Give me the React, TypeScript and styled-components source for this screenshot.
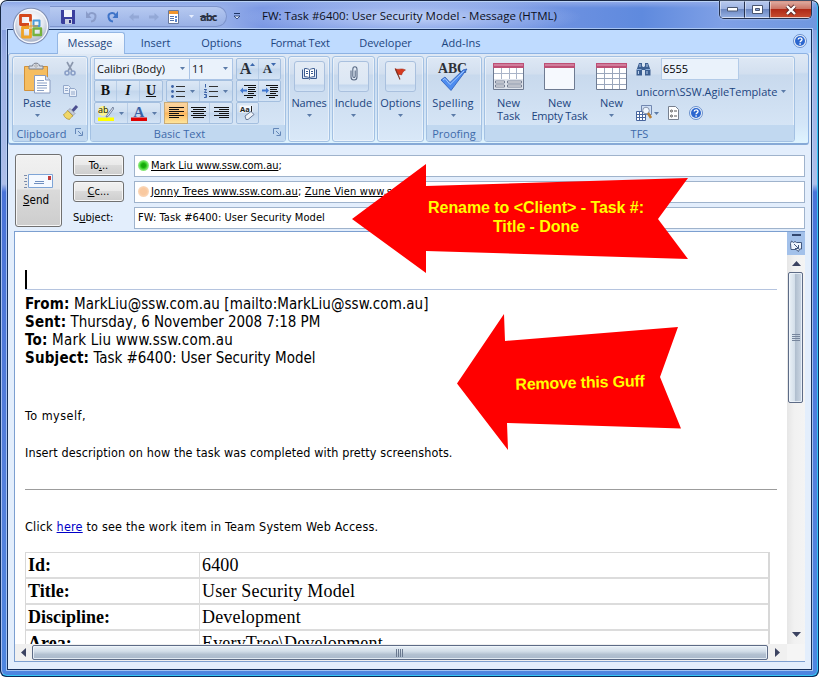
import React from 'react';
import styled, { createGlobalStyle, css } from 'styled-components';

const ui = '"Open Sans", "Noto Sans", sans-serif';
const tahoma = '"DejaVu Sans Condensed", "DejaVu Sans", sans-serif';

const GlobalStyle = createGlobalStyle`
  *, *::before, *::after { box-sizing: border-box; }
  body { margin: 0; background: #fff; overflow: hidden; }
  svg { display: block; flex: none; overflow: visible; }
`;

/* ---------- window frame ---------- */

const Frame = styled.div`
  position: relative;
  width: 819px;
  height: 677px;
  padding: 1px;
  border-radius: 7px 7px 6px 6px;
  background: linear-gradient(#16233c, #123a66 12%, #0a2a5c);
  overflow: hidden;
  font-family: ${ui};
`;

const Glass = styled.div`
  height: 675px;
  padding: 0 5px 5px 5px;
  border: 1px solid;
  border-color: #b9d2f6 #35c6f5 #35c6f5 #a8bff0;
  border-radius: 6px;
  background:
    radial-gradient(ellipse 170px 20px at 410px 15px, rgba(200, 216, 249, 0.9), rgba(200, 216, 249, 0) 100%),
    linear-gradient(#8fa9e8 0, rgba(120, 150, 228, 0) 6px),
    linear-gradient(90deg, #a9bfee 0, #9db5ea 210px, #7b98e4 260px, #7394e2 520px, #5f8ade 640px, #7fa0e6 720px, #6f97df 100%) 0 0 / 100% 28px no-repeat,
    linear-gradient(#7795dd 0, #9cb0e4 60px, #aebfe9 182px, #4a74d8 190px, #5480dc 480px, #4e86e0 100%);
`;

const Titlebar = styled.header`
  display: flex;
  height: 27px;
  margin-left: 8px;
`;

const Orb = styled.div`
  width: 38px;
  height: 38px;
  margin: 5px -2px 0 -3px;
  z-index: 3;
  flex: none;
`;

const QuickAccess = styled.div`
  display: flex;
  align-items: center;
  width: 177px;
  height: 21px;
  margin: 4px 0 0 2px;
  padding-left: 11px;
  flex: none;
  border: 1px solid #7d94cc;
  border-left: 0;
  border-radius: 0 11px 11px 0;
  background: linear-gradient(rgba(190, 207, 242, 0.75), rgba(150, 174, 226, 0.6));
`;

const Struck = styled.s`
  margin-left: 6px;
  font: bold 11px/16px 'Open Sans', sans-serif;
  letter-spacing: -0.9px;
  color: #2b3245;
`;

const QatMore = styled.div`
  width: 11px;
  margin: 11px 0 0 6px;
`;

const WindowTitle = styled.h1`
  flex: 1;
  margin: 4px 0 0 18px;
  font: 11.5px/20px ${ui};
  letter-spacing: 0.01px;
  white-space: nowrap;
  color: #0b0f1c;
`;

const Caption = styled.div`
  display: flex;
  height: 18px;
  margin: -1px 0 0 0;
  border: 1px solid #26324f;
  border-top: 0;
  border-radius: 0 0 5px 5px;
  overflow: hidden;
  box-shadow: 0 0 2px rgba(230, 240, 255, 0.8);
`;

const CaptionButton = styled.button<{ $close?: boolean }>`
  display: grid;
  place-items: center;
  width: ${(p) => (p.$close ? 41 : 25)}px;
  height: 17px;
  padding: 0;
  border: 1px solid rgba(255, 255, 255, 0.45);
  border-right: 1px solid #26324f;
  background: ${(p) =>
    p.$close
      ? 'linear-gradient(#dda79c 0, #cc7565 45%, #b02a17 50%, #c44a2e 100%)'
      : 'linear-gradient(#b5c7ed 0, #9db3e2 45%, #6c87c0 50%, #93aee2 100%)'};
  &:last-child { border-right: 0; }
`;

const Client = styled.main`
  display: flex;
  flex-direction: column;
  height: 641px;
  border: 1px solid #16305c;
  outline: 1px solid rgba(190, 215, 250, 0.75);
  background: #e3eefc;
`;

/* ---------- tabs ---------- */

const Tabs = styled.nav`
  display: flex;
  align-items: flex-start;
  height: 23px;
  padding: 2px 4px 0 49px;
  background: #bfdbff;
`;

const Tab = styled.a<{ $w: number; $ls?: number; $active?: boolean }>`
  width: ${(p) => p.$w}px;
  height: 21px;
  font-size: 11px;
  line-height: 22px;
  letter-spacing: ${(p) => p.$ls ?? 0}px;
  text-align: center;
  white-space: nowrap;
  color: #1c4580;
  ${(p) =>
    p.$active &&
    css`
      height: 22px;
      padding-right: 2px;
      border: 1px solid #93b6e4;
      border-bottom: 0;
      border-radius: 3px 3px 0 0;
      background: linear-gradient(#f6faff, #e3edf9);
      line-height: 20px;
      z-index: 1;
    `}
`;

const HelpSlot = styled.div`
  margin: 2px 0 0 auto;
`;

/* ---------- ribbon ---------- */

const Ribbon = styled.section`
  display: flex;
  gap: 2px;
  height: 92px;
  margin: 0 2px 0 0;
  padding: 2px 13px 0 3px;
  flex: none;
  border: 1px solid #8db2e3;
  border-bottom: 2px solid #86a9d6;
  border-radius: 3px;
  background: linear-gradient(#dfe9f5 0, #d2e0f1 18px, #c7d9ee 20px, #d4e6f8 70px, #dff4ff 100%);
`;

const Group = styled.div<{ $w: number }>`
  display: flex;
  flex-direction: column;
  width: ${(p) => p.$w}px;
  height: 86px;
  flex: none;
  border: 1px solid #a3c1e3;
  border-radius: 3px;
  box-shadow: inset 0 0 0 1px rgba(255, 255, 255, 0.45);
  background: linear-gradient(#dee8f5 0, #d2dfef 17px, #c8d9ed 18px, #d9e8f8 100%);
  overflow: hidden;
`;

const GroupBody = styled.div`
  display: flex;
  flex: 1;
  min-height: 0;
`;

const GroupName = styled.div`
  display: flex;
  align-items: center;
  justify-content: center;
  position: relative;
  height: 16px;
  background: #c1d8f0;
  font-size: 11px;
  line-height: 15px;
  color: #3e6aaa;
  white-space: nowrap;
`;

const Launcher = styled.span`
  position: absolute;
  right: 4px;
  top: 3px;
`;

const Big = styled.div<{ $w: number; $top?: number; $icon?: number }>`
  display: flex;
  flex-direction: column;
  align-items: center;
  width: ${(p) => p.$w}px;
  padding-top: ${(p) => p.$top ?? 4}px;
  flex: none;
  > :first-child { height: ${(p) => p.$icon ?? 33}px; }
  > svg:last-child { margin-top: 5px; }
`;

const BigLabel = styled.div<{ $ls?: number }>`
  font-size: 11px;
  line-height: 13px;
  letter-spacing: ${(p) => p.$ls ?? 0}px;
  text-align: center;
  color: #1c4580;
  white-space: nowrap;
`;

const Tile = styled.div`
  display: grid;
  place-items: center;
  width: 31px;
  height: 31px;
  border: 1px solid #a9c0de;
  border-radius: 3px;
  background: linear-gradient(#e3ebf5 0, #dce7f4 22px, #c3d6ed 23px, #d3e3f5 100%);
  > svg { margin-top: -6px; }
`;

const TileBox = styled.div``;
const IconSlot = styled.div``;

const SideIcons = styled.div`
  display: flex;
  flex-direction: column;
  gap: 7px;
  padding: 4px 0 0 2px;
`;

const FontGrid = styled.div`
  display: flex;
  flex-direction: column;
  padding: 1px 0 0 3px;
`;

const ToolRow = styled.div`
  display: flex;
  height: 22px;
  gap: 3px;
`;

const Combo = styled.div<{ $w: number }>`
  display: flex;
  align-items: center;
  justify-content: space-between;
  width: ${(p) => p.$w}px;
  height: 22px;
  padding: 0 4px 1px 2px;
  border: 1px solid #aac4e6;
  background: #eaf2fb;
  font-size: 11px;
  letter-spacing: 0;
  white-space: nowrap;
  color: #111;
  & + & { margin-left: -4px; }
`;

const Cluster = styled.div<{ $w: number }>`
  display: flex;
  align-items: stretch;
  width: ${(p) => p.$w}px;
  height: 22px;
  border: 1px solid #a4bfdf;
  border-radius: 2px;
  background: linear-gradient(#dbe7f5 0, #cfdff1 9px, #c3d6ec 10px, #d3e3f5 100%);
`;

const Tool = styled.div<{ $w: number; $on?: boolean }>`
  display: flex;
  align-items: center;
  justify-content: center;
  gap: 5px;
  width: ${(p) => p.$w}px;
  flex: none;
  ${(p) =>
    p.$on
      ? css`
          margin: -1px;
          border: 1px solid #c8ab78;
          background: linear-gradient(#fbd5a0, #fcc57d 45%, #fbb65c 50%, #fee59b);
        `
      : css`border-right: 1px solid rgba(160, 187, 220, 0.55);`}
  &:last-child { border-right: 0; }
`;

const Letter = styled.span<{ $kind: 'b' | 'i' | 'u' }>`
  font: 14px/18px 'Liberation Serif', serif;
  color: #111;
  font-weight: bold;
  font-style: ${(p) => (p.$kind === 'i' ? 'italic' : 'normal')};
  text-decoration: ${(p) => (p.$kind === 'u' ? 'underline' : 'none')};
`;

const Grow = styled.span<{ $size: number }>`
  display: flex;
  align-items: flex-end;
  font: bold ${(p) => p.$size}px/18px 'Liberation Serif', serif;
  color: #2b3038;
  > svg { margin: 0 0 12px -1px; align-self: flex-end; }
`;

const TfsSide = styled.div`
  display: flex;
  flex-direction: column;
  width: 158px;
  padding: 1px 0 0 0;
`;

const TfsRow = styled.div<{ $h: number; $gap: number }>`
  display: flex;
  align-items: center;
  gap: ${(p) => p.$gap}px;
  height: ${(p) => p.$h}px;
  font-size: 11px;
  color: #1c4580;
  white-space: nowrap;
`;

const TfsTools = styled(TfsRow)`
  > :nth-child(3) { margin-left: 8px; }
  > :nth-child(4) { margin-left: 9px; }
`;

const TaskId = styled.div`
  width: 78px;
  height: 22px;
  padding-left: 1px;
  border: 1px solid #b3cbe8;
  background: #eaf2fb;
  line-height: 20px;
  color: #000;
`;

/* ---------- message header form ---------- */

const Envelope = styled.section`
  display: flex;
  height: 86px;
  flex: none;
  padding: 9px 6px 0 7px;
  color: #000;
  font: 11px/20px ${tahoma};
`;

const Push = styled.button<{ $send?: boolean }>`
  display: flex;
  flex-direction: column;
  align-items: center;
  justify-content: center;
  width: ${(p) => (p.$send ? 47 : 51)}px;
  height: ${(p) => (p.$send ? 73 : 21)}px;
  padding: 0;
  flex: none;
  border: 1px solid #707070;
  border-radius: 3px;
  box-shadow: inset 0 0 0 1px #f6f6f6;
  background: linear-gradient(#f1f1f1 0, #e9e9e9 47%, #dadada 50%, #cdcdcd 100%);
  color: #000;
  font: 11px/15px ${tahoma};
`;

const SendText = styled.span`
  margin-top: 4px;
  margin-right: 5px;
  font-size: 11.5px;
`;

const Fields = styled.div`
  display: flex;
  flex-direction: column;
  flex: 1;
  gap: 4px;
  padding: 1px 0 0 11px;
`;

const FieldRow = styled.div`
  display: flex;
  align-items: center;
  height: 22px;
`;

const FieldHead = styled.div`
  width: 61px;
  flex: none;
  margin-top: -1px;
`;

const FieldBox = styled.div<{ $ls?: number }>`
  display: flex;
  align-items: center;
  flex: 1;
  height: 22px;
  padding-left: 3px;
  border: 1px solid #9fb3cc;
  background: #fff;
  letter-spacing: ${(p) => p.$ls ?? 0}px;
  white-space: pre;
`;

const Presence = styled.i<{ $tone: 'green' | 'peach' }>`
  width: 11px;
  height: 11px;
  margin: -2px 2px 0 0;
  border-radius: 50%;
  background: ${(p) =>
    p.$tone === 'green'
      ? 'radial-gradient(circle, #17a80c 0 25%, #35cf25 40%, #7fe571 60%, #c9f5c2 100%)'
      : 'radial-gradient(circle, #f9c9a0 0 40%, #fbd9bb 70%, #fdeee0 100%)'};
`;

/* ---------- message body ---------- */

const BodyBox = styled.section`
  display: grid;
  grid-template: 412px 17px / 1fr 18px;
  height: 431px;
  flex: none;
  margin: 0 6px 0 6px;
  border: 1px solid #7c9fd0;
  background: #fff;
`;

const Document = styled.article`
  padding: 38px 10px 0 10px;
  overflow: hidden;
  color: #000;
`;

const Caret = styled.div`
  width: 2px;
  height: 19px;
  background: #000;
`;

const Rule = styled.hr<{ $grey?: boolean }>`
  height: 1px;
  margin: 0;
  border: 0;
  background: ${(p) => (p.$grey ? '#9c9c9c' : '#b5c4df')};
`;

const Headers = styled.div`
  margin-top: 5px;
  height: 113px;
`;

const HeaderLine = styled.p<{ $ls: number }>`
  margin: 0;
  font: 15px/18px ${tahoma};
  letter-spacing: ${(p) => p.$ls}px;
  white-space: pre;
  b { letter-spacing: 0.2px; }
`;

const Para = styled.p<{ $h: number; $ls: number; $top?: number }>`
  height: ${(p) => p.$h}px;
  margin: ${(p) => p.$top ?? 0}px 0 0;
  font: 12.5px/16px ${tahoma};
  letter-spacing: ${(p) => p.$ls}px;
  white-space: nowrap;
  a { color: #0000c8; text-decoration: underline; }
`;

const Details = styled.dl`
  display: grid;
  grid-template-columns: 174px 1fr;
  width: 745px;
  margin: 0;
  border: 1px solid #d8d8d8;
  border-right: 2px solid #d8d8d8;
  font: 18px/24px 'Liberation Serif', serif;
`;

const Term = styled.dt`
  height: 26px;
  padding: 0 0 0 2px;
  border-bottom: 2px solid #dcdcdc;
  border-right: 1px solid #dcdcdc;
  font-weight: bold;
`;

const Value = styled.dd`
  height: 26px;
  margin: 0;
  padding: 0 0 0 2px;
  border-bottom: 2px solid #dcdcdc;
  letter-spacing: 0.17px;
`;

const VBar = styled.aside`
  display: flex;
  flex-direction: column;
  align-items: center;
  background: linear-gradient(90deg, #e6e6e6, #f1f1f1 40%, #f4f4f4);
`;

const PaneTools = styled.div`
  display: flex;
  flex-direction: column;
  align-items: center;
  gap: 4px;
  width: 18px;
  height: 23px;
  padding-top: 2px;
  background: #a3c1ea;
`;

const ArrowCell = styled.div<{ $w: number; $h: number }>`
  display: grid;
  place-items: center;
  width: ${(p) => p.$w}px;
  height: ${(p) => p.$h}px;
  flex: none;
`;

const Thumb = styled.div<{ $vertical?: boolean }>`
  display: grid;
  place-items: center;
  border: 1px solid #5d6b86;
  border-radius: 2px;
  box-shadow: inset 0 0 0 1px rgba(240, 246, 252, 0.8);
  ${(p) =>
    p.$vertical
      ? css`
          width: 15px;
          height: 131px;
          margin-right: 1px;
          background: linear-gradient(90deg, #eaf1f7 0, #d3dee9 45%, #b1bfcf 50%, #cdd8e5 100%);
        `
      : css`
          width: 736px;
          height: 15px;
          background: linear-gradient(#eaf1f7 0, #d3dee9 40%, #b3c1d1 65%, #a9b8cb 100%);
        `}
`;

const HBar = styled.div`
  display: flex;
  align-items: center;
  background: #f0f0f0;
`;

const Spacer = styled.div`flex: 1;`;
const Corner = styled.div`background: #f5f5f5;`;

/* ---------- callouts lying over the window ---------- */

const Overlay = styled.div`
  position: absolute;
  inset: 0;
  z-index: 5;
`;

const CalloutText = styled.div<{ $x: number; $y: number; $w: number; $tilt?: number; $ls: number }>`
  position: absolute;
  left: ${(p) => p.$x}px;
  top: ${(p) => p.$y}px;
  width: ${(p) => p.$w}px;
  transform: rotate(${(p) => p.$tilt ?? 0}deg);
  font: bold 16px/19px 'Liberation Sans', Arial, sans-serif;
  letter-spacing: ${(p) => p.$ls}px;
  text-align: center;
  white-space: nowrap;
  color: #ff0;
`;

/* ---------- icons ---------- */

const Drop = ({ color = '#5b7ba8' }: { color?: string }) => (
  <svg width="5" height="3"><path d="M0 0h5L2.5 3z" fill={color} /></svg>
);

const OfficeOrb = () => (
  <svg width="38" height="38" viewBox="0 0 38 38">
    <defs>
      <radialGradient id="orb" cx=".5" cy=".35" r=".65">
        <stop offset="0" stopColor="#fff" /><stop offset=".6" stopColor="#e4e8f0" /><stop offset="1" stopColor="#a9b3c8" />
      </radialGradient>
    </defs>
    <circle cx="19" cy="19" r="18.3" fill="#7e8eb4" />
    <circle cx="19" cy="19" r="17.2" fill="#f6f8fc" />
    <circle cx="19" cy="19" r="15.8" fill="url(#orb)" />
    <g fill="none" strokeLinejoin="round">
      <path d="M17 17.500H8.500v-9h10v6" stroke="#d4481c" strokeWidth="2.800" />
      <path d="M21.500 13.500h6v5.500h-6z" stroke="#4a9ad8" strokeWidth="2" />
      <path d="M17.500 20.500h-7v9.500h8v-8" stroke="#efa326" strokeWidth="2.800" />
      <path d="M21.500 21.500h7.500v6.500h-7.500z" stroke="#76b13c" strokeWidth="2.400" />
      <path d="M19 14v12M14 19h12" stroke="#e9952b" strokeWidth="1.200" />
    </g>
  </svg>
);

const Save = () => (
  <svg width="14" height="14"><path d="M0 0h14v14H1l-1-1z" fill="#3a3f9e" /><path d="M3 0h8v7H3z" fill="#f2f5fb" /><path d="M4 9h7v5H4z" fill="#c9cfe2" /><path d="M8 10h2v3H8z" fill="#2c2f80" /></svg>
);

const Undo = ({ flip }: { flip?: boolean }) => (
  <svg width="13" height="13" viewBox="0 0 13 13">
    <g transform={flip ? undefined : 'matrix(-1 0 0 1 13 0)'}>
      <path d="M6 11.500C1 11 0 4 4 3.200 6 2.800 7.500 3.500 8.500 5" fill="none" stroke={flip ? '#3f74c8' : '#8a9cc9'} strokeWidth="2" />
      <path d="M11 1v7H5.500z" fill={flip ? '#3f74c8' : '#8a9cc9'} />
    </g>
  </svg>
);

const Nav = ({ flip }: { flip?: boolean }) => (
  <svg width="10" height="8"><path d={flip ? 'M10 4 5.500 0v2.500H0v3h5.500V8z' : 'M0 4 4.500 0v2.500H10v3H4.500V8z'} fill="#93a8d6" /></svg>
);

const Sheet = () => (
  <svg width="11" height="14"><path d="M.5.5h10v13H.5z" fill="#fff" stroke="#68789c" /><path d="M1 1h9v3H1z" fill="#f0952c" /><path d="M2 6.500h4M2 8.500h4M2 10.500h4" stroke="#5474ad" /><path d="M7 6h2v2H7zM7 9h2v3H7z" fill="#5b86cd" /></svg>
);

const Help = () => (
  <svg width="14" height="14" viewBox="0 0 14 14">
    <circle cx="7" cy="7" r="6.500" fill="#e8f0fb" stroke="#6a90cd" />
    <circle cx="7" cy="7" r="5" fill="#2b66cf" />
    <path d="M5.200 5.600C5.200 3.300 9 3.300 9 5.400 9 6.900 7.100 6.700 7.100 8.200M7.100 9.300v1.500" stroke="#fff" strokeWidth="1.400" fill="none" />
  </svg>
);

const LauncherIcon = () => (
  <svg width="8" height="8"><path d="M.5 6V.5H6" stroke="#6487b8" fill="none" /><path d="M3 3l3.500 3.500M7.500 3.500v4h-4" stroke="#6487b8" fill="none" /></svg>
);

const Clipboard = () => (
  <svg width="27" height="31" viewBox="0 0 27 31">
    <path d="M.5 3.500h23v24H.5z" fill="#f5bd60" stroke="#d1913a" />
    <path d="M5 6h14V3h-3.500C15 .5 13.500.2 12 .2S9 .5 8.500 3H5z" fill="#d8dce4" stroke="#7a808c" />
    <circle cx="12" cy="3" r="1.200" fill="#fff" stroke="#777" strokeWidth=".6" />
    <path d="M10.500 12.500h11l4.500 4.500v13H10.500z" fill="#fff" stroke="#8a9cc0" />
    <path d="M21.500 12.500V17H26" fill="#d5e0f2" stroke="#8a9cc0" />
    <path d="M13 17.500h7M13 20h10M13 22.500h10M13 25h10M13 27.500h7" stroke="#7d95bf" strokeWidth=".9" />
  </svg>
);

const Cut = () => (
  <svg width="14" height="16" viewBox="0 0 14 16"><path d="M4 1 9 10M10 1 5 10" stroke="#8b97ad" strokeWidth="1.600" /><circle cx="4" cy="12" r="2" fill="none" stroke="#8a9fc7" strokeWidth="1.600" /><circle cx="10" cy="12" r="2" fill="none" stroke="#8a9fc7" strokeWidth="1.600" /></svg>
);

const Copy = () => (
  <svg width="14" height="14" viewBox="0 0 14 14"><g fill="#e8eff9" stroke="#93a8ca"><path d="M.5 1.500h5l2 2v6h-7z" /><path d="M6.500 4.500h5l2 2v6h-7z" /></g><path d="M2 4.500h3M2 6.500h3M8 8h4M8 10h4" stroke="#93a8ca" /></svg>
);

const Brush = () => (
  <svg width="15" height="15" viewBox="0 0 15 15"><path d="M14 1 9.500 6" stroke="#4b4f90" strokeWidth="3" /><path d="M7 3.500l5 5-2 2-5-5z" fill="#c7cbd8" stroke="#777c90" strokeWidth=".6" /><path d="M4.500 5.500 10 11c-2 1-2.500 2-3.500 3.500-3-.5-5-2-6-5C2 8.500 3.500 7.500 4.500 5.500z" fill="#f0d768" stroke="#a98b2a" strokeWidth=".7" /></svg>
);

const ListIcon = ({ numbered }: { numbered?: boolean }) => (
  <svg width="14" height="14" viewBox="0 0 14 14">
    <path d="M5 2.500h9M5 7.500h9M5 12.500h9" stroke="#333" />
    {numbered
      ? <path d="M1.500 0v3.500M0 5.500h2.500L.5 8.500H3M0 10.500h2.500v3H0M1 12h1.500" stroke="#3d64a8" fill="none" />
      : <g fill="#3d64a8"><circle cx="1.500" cy="2.500" r="1.400" /><circle cx="1.500" cy="7.500" r="1.400" /><circle cx="1.500" cy="12.500" r="1.400" /></g>}
  </svg>
);

const alignments = {
  left: [[0, 15], [0, 10], [0, 15], [0, 10], [0, 15], [0, 10]],
  center: [[0, 15], [2, 11], [0, 15], [2, 11], [0, 15], [2, 11]],
  right: [[0, 15], [5, 10], [0, 15], [5, 10], [0, 15], [5, 10]],
};

const Align = ({ to }: { to: keyof typeof alignments }) => (
  <svg width="15" height="12">
    {alignments[to].map(([x, w], i) => <path key={i} d={`M${x} ${i * 2 + 0.5}h${w}`} stroke="#111" />)}
  </svg>
);

const Indent = ({ more }: { more?: boolean }) => (
  <svg width="16" height="13" viewBox="0 0 16 13">
    <path d="M4 .5h12M8 2.500h8M8 4.500h7M8 6.500h8M8 8.500h6M4 10.500h12M7 12.500h6" stroke="#111" />
    <path d={more ? 'M7 5.500 4 2.500v2H0v2h4v2z' : 'M0 5.500l3-3v2h4v2H3v2z'} fill="#3f76cf" />
  </svg>
);

const Highlighter = () => (
  <svg width="16" height="16" viewBox="0 0 16 16"><path d="M0 12.500h16V16H0z" fill="#ff0" /><circle cx="5" cy="6" r="5" fill="#fbf58f" /><text x="0" y="8" fontFamily="Open Sans" fontSize="9" fill="#111">ab</text><path d="M15 2 9 10l-1 2 2-.5L15.500 4z" fill="#dfe6f2" stroke="#5e6d8c" strokeWidth=".8" /></svg>
);

const FontColor = () => (
  <svg width="16" height="16" viewBox="0 0 16 16"><path d="M0 12.500h16V16H0z" fill="#e00000" /><text x="2.500" y="11.500" fontFamily="Liberation Serif" fontWeight="bold" fontSize="15" fill="#3b62a5">A</text></svg>
);

const Eraser = () => (
  <svg width="17" height="16" viewBox="0 0 17 16"><path d="M.5.500h13v7H.5z" fill="#f4f8fd" /><text x="1" y="7" fontFamily="Open Sans" fontSize="7.500" fontWeight="bold" fill="#222">Aa</text><path d="M12.500 1v6" stroke="#222" /><path d="M6 11l6-4.500 3 3L9 14.500H7z" fill="#eef2f8" stroke="#5f6f8d" strokeWidth=".9" /></svg>
);

const Book = () => (
  <svg width="15" height="12" viewBox="0 0 15 12"><path d="M.5 1.500v9h6l1 .8 1-.8h6v-9" fill="#dce6f6" stroke="#3a5a8f" /><path d="M2.500.5c2 0 4 .3 5 1.500v8c-1-1-3-1.300-5-1.300zM12.500.5c-2 0-4 .3-5 1.500v8c1-1 3-1.300 5-1.300z" fill="#fff" stroke="#3a5a8f" /><path d="M4 3.500h2M4 5.500h2M9 3.500h2M9 5.500h2" stroke="#3a5a8f" /></svg>
);

const Clip = () => (
  <svg width="8" height="15" viewBox="0 0 8 15"><path d="M1 4.500V11c0 4 6 4 6 0V3.500C7-.2 2.800-.2 2.800 3.500V10c0 2 2.400 2 2.400 0V4.500" fill="none" stroke="#5b6b85" strokeWidth="1.100" /></svg>
);

const Flag = () => (
  <svg width="11" height="12" viewBox="0 0 11 12"><path d="M0 .5c3 2 6-1 10.500 1.500C8 3 7.500 5 6.500 7 4.500 6 3.500 6.500 2.500 6.500z" fill="#d63a1f" stroke="#9b2413" strokeWidth=".5" /><path d="M.5 1 5 11.500" stroke="#7a3524" strokeWidth="1.100" /></svg>
);

const Spell = () => (
  <svg width="32" height="31" viewBox="0 0 32 31">
    <text x="1" y="12" fontFamily="Liberation Serif" fontWeight="bold" fontSize="15" textLength="29" lengthAdjust="spacingAndGlyphs" fill="#2e3138">ABC</text>
    <path d="M4 19l4-3 5 5.500L26 9l4-1L14 29.500z" fill="#4d8cf0" stroke="#2c5cb6" strokeWidth=".8" />
    <path d="M6 19l2-1.500 5 6L27 10" fill="none" stroke="#a5c8fb" strokeWidth="1" />
  </svg>
);

const Table = ({ kind }: { kind: 'task' | 'empty' | 'grid' }) => (
  <svg width="31" height="27" viewBox="0 0 31 27">
    <path d="M.5.5h30v26H.5z" fill={kind === 'empty' ? '#f6f9fe' : '#fff'} stroke="#6e7b92" />
    <path d="M0 0h31v5H0z" fill="#bd4f75" /><path d="M1 1h29v2H1z" fill="#d07c9a" />
    {kind === 'grid' && <path d="M1 10.500h29M1 15.500h29M1 21.500h29M8.500 5v21M16.500 5v21M23.500 5v21" stroke="#9aa6bb" />}
    {kind === 'task' && (
      <>
        <path d="M1 10.500h29M8.500 5v12M16.500 5v12M23.500 5v12" stroke="#a9b4c8" />
        <path d="M1 16h29v10H1z" fill="#dfe4ec" />
        <path d="M2.500 18h9v2h-9zM14.500 18h14v2h-14zM2.500 22h9v2h-9zM14.500 22h14v2h-14z" fill="#fff" stroke="#6b758a" strokeWidth=".9" />
      </>
    )}
  </svg>
);

const Binoculars = () => (
  <svg width="15" height="14" viewBox="0 0 15 14"><path d="M3 1h3v3l1 1h1l1-1V1h3l2.500 7v5.500H9V8H6v5.500H.5V8z" fill="#3c5f91" /><path d="M4 2v3M11 2v3M2.500 9v3M11 9v3" stroke="#b9cfec" /><path d="M1 7.500h4.500M9.500 7.500H14" stroke="#8fb0dc" /></svg>
);

const FindTable = () => (
  <svg width="17" height="16" viewBox="0 0 17 16"><path d="M5.500.5h10v9h-10z" fill="#cfe0f6" stroke="#7187b0" /><path d="M.5 6.500h9v9h-9z" fill="#fff" stroke="#48669e" /><path d="M1 9.500h8M1 12.500h8M3.500 7v8M6.500 7v8" stroke="#48669e" /><circle cx="10" cy="5.500" r="3.300" fill="#eef6ff" stroke="#8996ae" /><path d="M12 8l3 5" stroke="#b98038" strokeWidth="2.500" /></svg>
);

const Report = () => (
  <svg width="11" height="14" viewBox="0 0 11 14"><path d="M.5.5h7l3 3v10H.5z" fill="#fff" stroke="#77808f" /><circle cx="3.500" cy="5" r="1" fill="none" stroke="#555" /><circle cx="3.500" cy="10" r="1" fill="none" stroke="#555" /><path d="M6 5h3M6 10h3" stroke="#555" /></svg>
);

const Letterhead = () => (
  <svg width="29" height="15" viewBox="0 0 29 15"><path d="M0 1.500h3M1 4.500h2M0 7.500h3M1 10.500h2M0 13.500h3" stroke="#7c8cab" /><path d="M4.500.5h24v13h-24z" fill="#f5f9ff" stroke="#7ea4d6" /><path d="M24 2h3v4h-3z" fill="#c03a3a" /><path d="M11 7.500h9M10 9.500h10" stroke="#6f8fc0" /></svg>
);

const Arrow = ({ dir }: { dir: 'up' | 'down' | 'left' | 'right' }) => {
  const d = { up: 'M0 5 4.500 0 9 5z', down: 'M0 0h9L4.500 5z', left: 'M5 0v9L0 4.500z', right: 'M0 0v9l5-4.500z' }[dir];
  return <svg width="9" height="9" viewBox={dir === 'up' || dir === 'down' ? '0 -2 9 9' : '-2 0 9 9'}><path d={d} fill="#3b4361" /></svg>;
};

/* ---------- page ---------- */

export default function App() {
  return (
    <>
      <GlobalStyle />
      <Frame>
        <Glass>
          <Titlebar>
            <Orb><OfficeOrb /></Orb>
            <QuickAccess>
              <Save />
              <Spacer /><Undo /><Spacer /><Undo flip /><Spacer /><Nav /><Spacer /><Nav flip /><Spacer />
              <Sheet /><Spacer /><Drop color="#e6eeff" />
              <Struck>abc</Struck><Spacer />
            </QuickAccess>
            <QatMore><svg width="8" height="7"><path d="M1 .5h6" stroke="#1d3566" /><path d="M1 3h6L4 6z" fill="#eaf1ff" stroke="#1d3566" strokeWidth=".8" /></svg></QatMore>
            <WindowTitle>FW: Task #6400: User Security Model - Message (HTML)</WindowTitle>
            <Caption>
              <CaptionButton><svg width="11" height="5"><path d="M.5.5h10v3.500H.5z" fill="#fff" stroke="#4a5670" /></svg></CaptionButton>
              <CaptionButton><svg width="11" height="9"><path d="M.5.500h10v8H.5z" fill="#fff" stroke="#4a5670" /><path d="M3.500 3.500h4v2h-4z" fill="#8aa2d4" stroke="#4a5670" /></svg></CaptionButton>
              <CaptionButton $close><svg width="12" height="10"><path d="M2 1l8 8M10 1 2 9" stroke="#5a2a2a" strokeWidth="4" /><path d="M2 1l8 8M10 1 2 9" stroke="#fff" strokeWidth="2.400" /></svg></CaptionButton>
            </Caption>
          </Titlebar>
          <Client>
            <Tabs>
              <Tab $w={68} $active>Message</Tab>
              <Tab $w={61}>Insert</Tab>
              <Tab $w={71}>Options</Tab>
              <Tab $w={86} $ls={-0.24}>Format Text</Tab>
              <Tab $w={85}>Developer</Tab>
              <Tab $w={66}>Add-Ins</Tab>
              <HelpSlot><Help /></HelpSlot>
            </Tabs>
            <Ribbon>
              <Group $w={76}>
                <GroupBody>
                  <Big $w={48} $icon={35}><Clipboard /><BigLabel>Paste</BigLabel><Drop /></Big>
                  <SideIcons><Cut /><Copy /><Brush /></SideIcons>
                </GroupBody>
                <GroupName>Clipboard&nbsp;&nbsp;&nbsp;&nbsp;&nbsp;&nbsp;<Launcher><LauncherIcon /></Launcher></GroupName>
              </Group>
              <Group $w={196}>
                <GroupBody>
                  <FontGrid>
                    <ToolRow>
                      <Combo $w={96}>Calibri (Body)<Drop /></Combo>
                      <Combo $w={44}>11<Drop /></Combo>
                      <Cluster $w={45}>
                        <Tool $w={22}><Grow $size={16}>A<svg width="5" height="3"><path d="M0 3h5L2.500 0z" fill="#3c68ad" /></svg></Grow></Tool>
                        <Tool $w={21}><Grow $size={13}>A<Drop color="#3c68ad" /></Grow></Tool>
                      </Cluster>
                    </ToolRow>
                    <ToolRow>
                      <Cluster $w={69}>
                        <Tool $w={22}><Letter $kind="b">B</Letter></Tool>
                        <Tool $w={23}><Letter $kind="i">I</Letter></Tool>
                        <Tool $w={22}><Letter $kind="u">U</Letter></Tool>
                      </Cluster>
                      <Cluster $w={67}>
                        <Tool $w={33}><ListIcon /><Drop /></Tool>
                        <Tool $w={32}><ListIcon numbered /><Drop /></Tool>
                      </Cluster>
                      <Cluster $w={45}>
                        <Tool $w={22}><Indent /></Tool>
                        <Tool $w={21}><Indent more /></Tool>
                      </Cluster>
                    </ToolRow>
                    <ToolRow>
                      <Cluster $w={67}>
                        <Tool $w={33}><Highlighter /><Drop /></Tool>
                        <Tool $w={32}><FontColor /><Drop /></Tool>
                      </Cluster>
                      <Cluster $w={69}>
                        <Tool $w={24} $on><Align to="left" /></Tool>
                        <Tool $w={23}><Align to="center" /></Tool>
                        <Tool $w={22}><Align to="right" /></Tool>
                      </Cluster>
                      <Cluster $w={23}><Tool $w={21}><Eraser /></Tool></Cluster>
                    </ToolRow>
                  </FontGrid>
                </GroupBody>
                <GroupName>Basic Text&nbsp;&nbsp;&nbsp;&nbsp;&nbsp;&nbsp;<Launcher><LauncherIcon /></Launcher></GroupName>
              </Group>
              <Group $w={42}>
                <Big $w={40} $icon={35}><TileBox><Tile><Book /></Tile></TileBox><BigLabel $ls={-0.2}>Names</BigLabel><Drop /></Big>
              </Group>
              <Group $w={43}>
                <Big $w={41} $icon={35}><TileBox><Tile><Clip /></Tile></TileBox><BigLabel>Include</BigLabel><Drop /></Big>
              </Group>
              <Group $w={47}>
                <Big $w={45} $icon={35}><TileBox><Tile><Flag /></Tile></TileBox><BigLabel>Options</BigLabel><Drop /></Big>
              </Group>
              <Group $w={56}>
                <GroupBody><Big $w={52} $icon={35}><IconSlot><Spell /></IconSlot><BigLabel $ls={0.2}>Spelling</BigLabel><Drop /></Big></GroupBody>
                <GroupName>Proofing</GroupName>
              </Group>
              <Group $w={311}>
                <GroupBody>
                  <Big $w={47} $top={6} $icon={33}><IconSlot><Table kind="task" /></IconSlot><BigLabel>New</BigLabel><BigLabel>Task</BigLabel></Big>
                  <Big $w={55} $top={6} $icon={33}><IconSlot><Table kind="empty" /></IconSlot><BigLabel>New</BigLabel><BigLabel $ls={-0.25}>Empty Task</BigLabel></Big>
                  <Big $w={49} $top={6} $icon={33}><IconSlot><Table kind="grid" /></IconSlot><BigLabel>New</BigLabel><Drop /></Big>
                  <TfsSide>
                    <TfsRow $h={22} $gap={10}><Binoculars /><TaskId>6555</TaskId></TfsRow>
                    <TfsRow $h={22} $gap={4}>unicorn\SSW.AgileTemplate<Drop /></TfsRow>
                    <TfsTools $h={22} $gap={1}><FindTable /><Drop /><Report /><Help /></TfsTools>
                  </TfsSide>
                </GroupBody>
                <GroupName>TFS</GroupName>
              </Group>
            </Ribbon>
            <Envelope>
              <Push $send><Letterhead /><SendText><u>S</u>end</SendText></Push>
              <Fields>
                <FieldRow>
                  <FieldHead><Push><span>To<u>.</u>..</span></Push></FieldHead>
                  <FieldBox $ls={-0.06}><Presence $tone="green" /><u>Mark Liu www.ssw.com.au</u>;</FieldBox>
                </FieldRow>
                <FieldRow>
                  <FieldHead><Push><span><u>C</u>c...</span></Push></FieldHead>
                  <FieldBox $ls={0.16}><Presence $tone="peach" /><u>Jonny Trees www.ssw.com.au</u>; <u>Zune Vien www.ssw.com.au</u></FieldBox>
                </FieldRow>
                <FieldRow>
                  <FieldHead>S<u>u</u>bject:</FieldHead>
                  <FieldBox $ls={0.06}>FW: Task #6400: User Security Model</FieldBox>
                </FieldRow>
              </Fields>
            </Envelope>
            <BodyBox>
              <Document>
                <Caret />
                <Rule />
                <Headers>
                  <HeaderLine $ls={0.08}><b>From:</b> MarkLiu@ssw.com.au [mailto:MarkLiu@ssw.com.au]</HeaderLine>
                  <HeaderLine $ls={-0.06}><b>Sent:</b> Thursday, 6 November 2008 7:18 PM</HeaderLine>
                  <HeaderLine $ls={0.24}><b>To:</b> Mark Liu www.ssw.com.au</HeaderLine>
                  <HeaderLine $ls={-0.03}><b>Subject:</b> Task #6400: User Security Model</HeaderLine>
                </Headers>
                <Para $h={37} $ls={0.48}>To myself,</Para>
                <Para $h={44} $ls={0.1}>Insert description on how the task was completed with pretty screenshots.</Para>
                <Rule $grey />
                <Para $h={33} $top={29} $ls={0.2}>Click <a href="#here">here</a> to see the work item in Team System Web Access.</Para>
                <Details>
                  <Term>Id:</Term><Value>6400</Value>
                  <Term>Title:</Term><Value>User Security Model</Value>
                  <Term>Discipline:</Term><Value>Development</Value>
                  <Term>Area:</Term><Value>EveryTree\Development</Value>
                </Details>
              </Document>
              <VBar>
                <PaneTools>
                  <svg width="9" height="2"><path d="M0 0h9v2H0z" fill="#33486f" /></svg>
                  <svg width="12" height="12" viewBox="0 0 12 12"><path d="M.5 3.500 1.500 1l2 1.500L5 1.500l1.500 1H11.500V9H9.500l-1 2.500L6 9.500H1z" fill="#eef4fc" stroke="#44597f" /><path d="M4 4l4.500 4.500M8.500 5v3.500H5" stroke="#44597f" fill="none" /></svg>
                </PaneTools>
                <ArrowCell $w={18} $h={17}><Arrow dir="up" /></ArrowCell>
                <Thumb $vertical><svg width="8" height="7"><path d="M0 .5h8M0 2.500h8M0 4.500h8M0 6.500h8" stroke="#76859c" /></svg></Thumb>
                <Spacer />
                <ArrowCell $w={18} $h={19}><Arrow dir="down" /></ArrowCell>
              </VBar>
              <HBar>
                <ArrowCell $w={17} $h={16}><Arrow dir="left" /></ArrowCell>
                <Thumb><svg width="8" height="8"><path d="M.5 0v8M2.500 0v8M4.500 0v8M6.500 0v8" stroke="#6a788f" /></svg></Thumb>
                <ArrowCell $w={19} $h={16}><Arrow dir="right" /></ArrowCell>
              </HBar>
              <Corner />
            </BodyBox>
          </Client>
        </Glass>
        <Overlay>
          <svg width="819" height="677" fill="#f00">
            <path d="M352 219 426 164v22L688 178l-30 41 30 40-262-8v22z" />
            <path d="M457 383.500 504 314l1 27 173-14-18 50 21 51.500L507 423l1 27z" />
          </svg>
          <CalloutText $x={426} $y={198} $w={220} $ls={-0.06}>Rename to &lt;Client&gt; - Task #:<br />Title - Done</CalloutText>
          <CalloutText $x={505} $y={373} $w={150} $tilt={-1.5} $ls={-0.2}>Remove this Guff</CalloutText>
        </Overlay>
      </Frame>
    </>
  );
}
